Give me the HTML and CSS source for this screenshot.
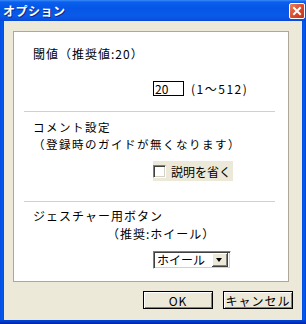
FILE: index.html
```html
<!DOCTYPE html>
<html lang="ja">
<head>
    <meta charset="UTF-8">
    <title>オプション</title>
    <link rel="stylesheet" href="styles.css">
</head>
<body>
    <div class="window">
        <div class="titlebar">
            <span class="title">オプション</span>
            <span class="close">
                <svg width="14" height="14" viewBox="0 0 14 14">
                    <path d="M4 4 L10 10 M10 4 L4 10" stroke="#fff" stroke-width="2" stroke-linecap="square"/>
                </svg>
            </span>
        </div>
        <div class="client">
            <div class="panel">
                <div class="label sec1">閾値（推奨値:20）</div>
                <div class="value-row">
                    <span class="num">20</span>
                    <span class="range">(1〜512)</span>
                </div>
                <div class="sep"></div>
                <div class="label sec2">コメント設定<br>（登録時のガイドが無くなります）</div>
                <div class="check-row">
                    <span class="check"></span>
                    <span>説明を省く</span>
                </div>
                <div class="sep sep2"></div>
                <div class="label sec3">ジェスチャー用ボタン</div>
                <div class="label sub">（推奨:ホイール）</div>
                <div class="combo">
                    <span class="combo-text">ホイール</span>
                    <span class="arrow"></span>
                </div>
            </div>
            <div class="buttons">
                <button class="btn">OK</button>
                <button class="btn">キャンセル</button>
            </div>
        </div>
    </div>
</body>
</html>
```

FILE: styles.css
```css
body {
    margin: 0;
    font-family: "Noto Sans CJK JP", "DejaVu Sans", sans-serif;
    font-size: 12px;
    letter-spacing: 1px;
    color: #000;
}

.window {
    width: 306px;
    height: 324px;
    box-sizing: border-box;
    display: flex;
    flex-direction: column;
    background: linear-gradient(to right, #0a4ad8 0, #0058ee 1px, #0058ee 3px, #0847d0 4px, #0847d0 302px, #0058ee 303px, #0058ee 305px, #0033c0 306px);
    padding: 0 4px 4px 4px;
    position: relative;
}

.window::after {
    content: "";
    position: absolute;
    left: 0;
    right: 0;
    bottom: 0;
    height: 4px;
    background: linear-gradient(to bottom, #0045d6 0, #0038c8 2px, #00229a 4px);
}

.titlebar {
    height: 21px;
    margin: 0 -4px;
    padding: 0 4px 0 3px;
    display: flex;
    align-items: center;
    justify-content: space-between;
    background: linear-gradient(to bottom, #3c8cf8 0, #0a5fee 2px, #0456e6 8px, #0a5ae8 16px, #0a4fdc 20px, #0847d0 21px);
}

.title {
    color: #fff;
    font-weight: bold;
    font-size: 12px;
    letter-spacing: 0.5px;
    text-shadow: 1px 1px #0a2a8a;
}

.close {
    width: 14px;
    height: 14px;
    margin-right: -3px;
    border: 1px solid #fff;
    border-radius: 2px;
    background: linear-gradient(135deg, #e8835c 0, #d9482a 55%, #c03418 100%);
    display: flex;
}

.client {
    flex: 1;
    background: #ece9d8;
    padding: 10px 13px 0 9px;
}

.panel {
    height: 251px;
    box-sizing: border-box;
    background: #fff;
    border: 1px solid #aca899;
    padding: 0 13px 0 10px;
}

.label {
    line-height: 15px;
    padding-left: 9px;
}

.sec1 {
    margin-top: 14px;
}

.value-row {
    margin-top: 20px;
    height: 15px;
    display: flex;
    align-items: center;
    padding-left: 129px;
}

.num {
    width: 28px;
    height: 13px;
    border: 1px solid #000;
    line-height: 13px;
    padding-left: 1px;
    letter-spacing: 0;
}

.range {
    margin-left: 7px;
    letter-spacing: 1.5px;
}

.sep {
    height: 1px;
    background: #d4d0c8;
    margin-top: 15px;
}

.sec2 {
    margin-top: 7px;
    font-size: 11.5px;
    letter-spacing: 1.5px;
    line-height: 17px;
}

.check-row {
    margin: 8px 0 0 129px;
    width: 80px;
    height: 20px;
    background: #ece9d8;
    display: flex;
    align-items: center;
    letter-spacing: 0;
}

.check {
    width: 11px;
    height: 11px;
    background: #fff;
    border: 1px solid;
    border-color: #808080 #fff #fff #808080;
    box-shadow: inset 1px 1px #404040, inset -1px -1px #d4d0c8;
    margin-right: 5px;
}

.sep2 {
    margin-top: 20px;
}

.sec3 {
    margin-top: 6px;
}

.sub {
    margin-top: 3px;
    padding-left: 83px;
}

.combo {
    margin: 10px 0 0 129px;
    width: 78px;
    height: 18px;
    box-sizing: border-box;
    border: 1px solid;
    border-color: #808080 #fff #fff #808080;
    box-shadow: inset 1px 1px #404040, inset -1px -1px #d4d0c8;
    display: flex;
    align-items: center;
    justify-content: space-between;
    padding: 0 2px 0 3px;
    letter-spacing: 0;
}

.combo-text {
    line-height: 14px;
}

.arrow {
    width: 16px;
    height: 14px;
    background: #ece9d8;
    box-shadow: inset -1px -1px #404040, inset 1px 1px #fff, inset -2px -2px #808080;
    position: relative;
}

.arrow::after {
    content: "";
    position: absolute;
    left: 4px;
    top: 5px;
    border-left: 3.5px solid transparent;
    border-right: 3.5px solid transparent;
    border-top: 4px solid #000;
}

.buttons {
    margin-top: 9px;
    margin-right: -4px;
    display: flex;
    justify-content: flex-end;
    gap: 10px;
}

.btn {
    width: 70px;
    height: 18px;
    padding: 0;
    margin: 0;
    border: 1px solid #000;
    background: #ece9d8;
    box-shadow: inset 1px 1px #fff, inset -1px -1px #808080;
    font-family: "Noto Sans CJK JP", "DejaVu Sans", sans-serif;
    font-size: 12px;
    letter-spacing: 1px;
    line-height: 15px;
    color: #000;
}
```
